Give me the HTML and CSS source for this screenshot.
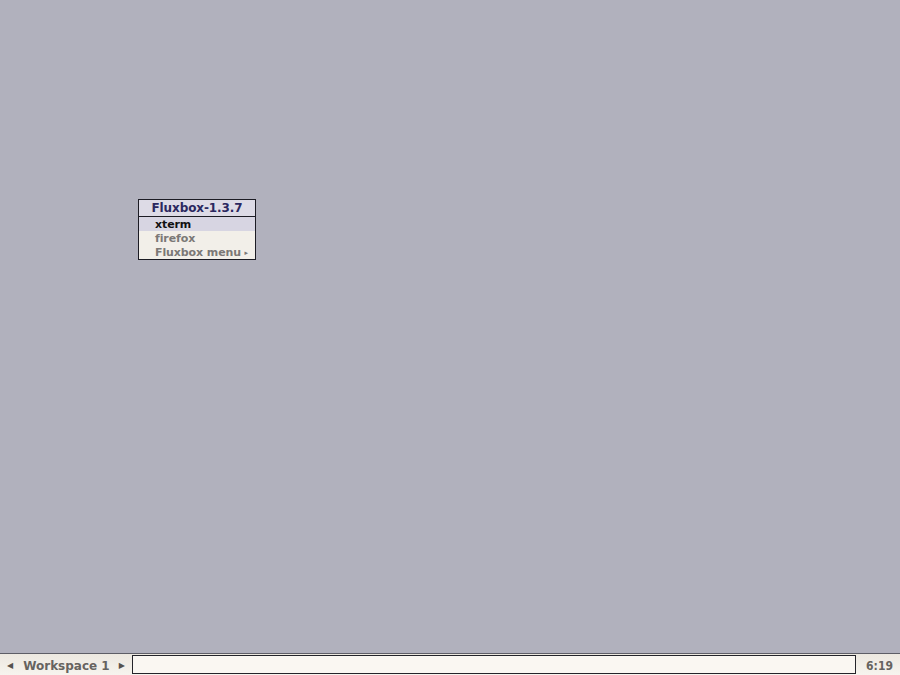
FILE: index.html
```html
<!DOCTYPE html>
<html>
<head>
<meta charset="utf-8">
<link rel="stylesheet" href="styles.css">
</head>
<body>
<div class="screen">
  <div class="desktop">
    <div class="menu">
      <div class="menu-title">Fluxbox-1.3.7</div>
      <div class="menu-items">
        <div class="item active">xterm</div>
        <div class="item">firefox</div>
        <div class="item sub">Fluxbox menu <span class="arrow">&#9656;</span></div>
      </div>
    </div>
  </div>
  <div class="toolbar">
    <div class="ws">
      <span class="ws-arrow">&#9664;</span>
      <span class="ws-name">Workspace 1</span>
      <span class="ws-arrow">&#9654;</span>
    </div>
    <div class="iconbar"></div>
    <div class="clock">6:19</div>
  </div>
</div>
</body>
</html>
```
FILE: styles.css
```css
html, body {
  margin: 0;
  padding: 0;
  width: 900px;
  height: 675px;
  overflow: hidden;
  font-family: "DejaVu Sans", sans-serif;
}
.screen {
  width: 900px;
  height: 675px;
  display: flex;
  flex-direction: column;
  background: #b1b1bd;
}
.desktop {
  flex: 1;
  position: relative;
}
.menu {
  position: absolute;
  left: 138px;
  top: 199px;
  width: 116px;
  border: 1px solid #1c1c24;
  background: #f2efe9;
  font-weight: bold;
  font-size: 11px;
}
.menu-title {
  height: 16px;
  line-height: 17px;
  text-align: center;
  color: #2b2860;
  background: #dddbe6;
  border-bottom: 1px solid #1c1c24;
  font-size: 12px;
  letter-spacing: -0.1px;
}
.item {
  height: 13px;
  padding-top: 1px;
  line-height: 14px;
  padding-left: 16px;
  color: #7b7876;
  position: relative;
  letter-spacing: -0.1px;
}
.item.active {
  background: #d7d5e2;
  color: #111;
}
.item .arrow {
  position: absolute;
  right: 7px;
  top: 1px;
  font-size: 7px;
}
.toolbar {
  height: 21px;
  border-top: 1px solid #5d5d66;
  background: linear-gradient(#ece8e0, #f7f4ee);
  display: flex;
  align-items: center;
  font-weight: bold;
  font-size: 12px;
  color: #66635f;
}
.ws {
  display: flex;
  align-items: center;
  width: 132px;
  padding-left: 7px;
  padding-top: 2px;
  box-sizing: border-box;
}
.ws-arrow {
  font-size: 8px;
  color: #55524f;
}
.ws-name {
  margin: 0 9px 0 10px;
}
.iconbar {
  flex: 1;
  height: 17px;
  border: 1px solid #24242a;
  background: #faf7f2;
}
.clock {
  width: 44px;
  text-align: center;
  font-family: "DejaVu Sans Condensed", "DejaVu Sans", sans-serif;
  padding-left: 3px;
  padding-top: 2px;
  box-sizing: border-box;
}
```
